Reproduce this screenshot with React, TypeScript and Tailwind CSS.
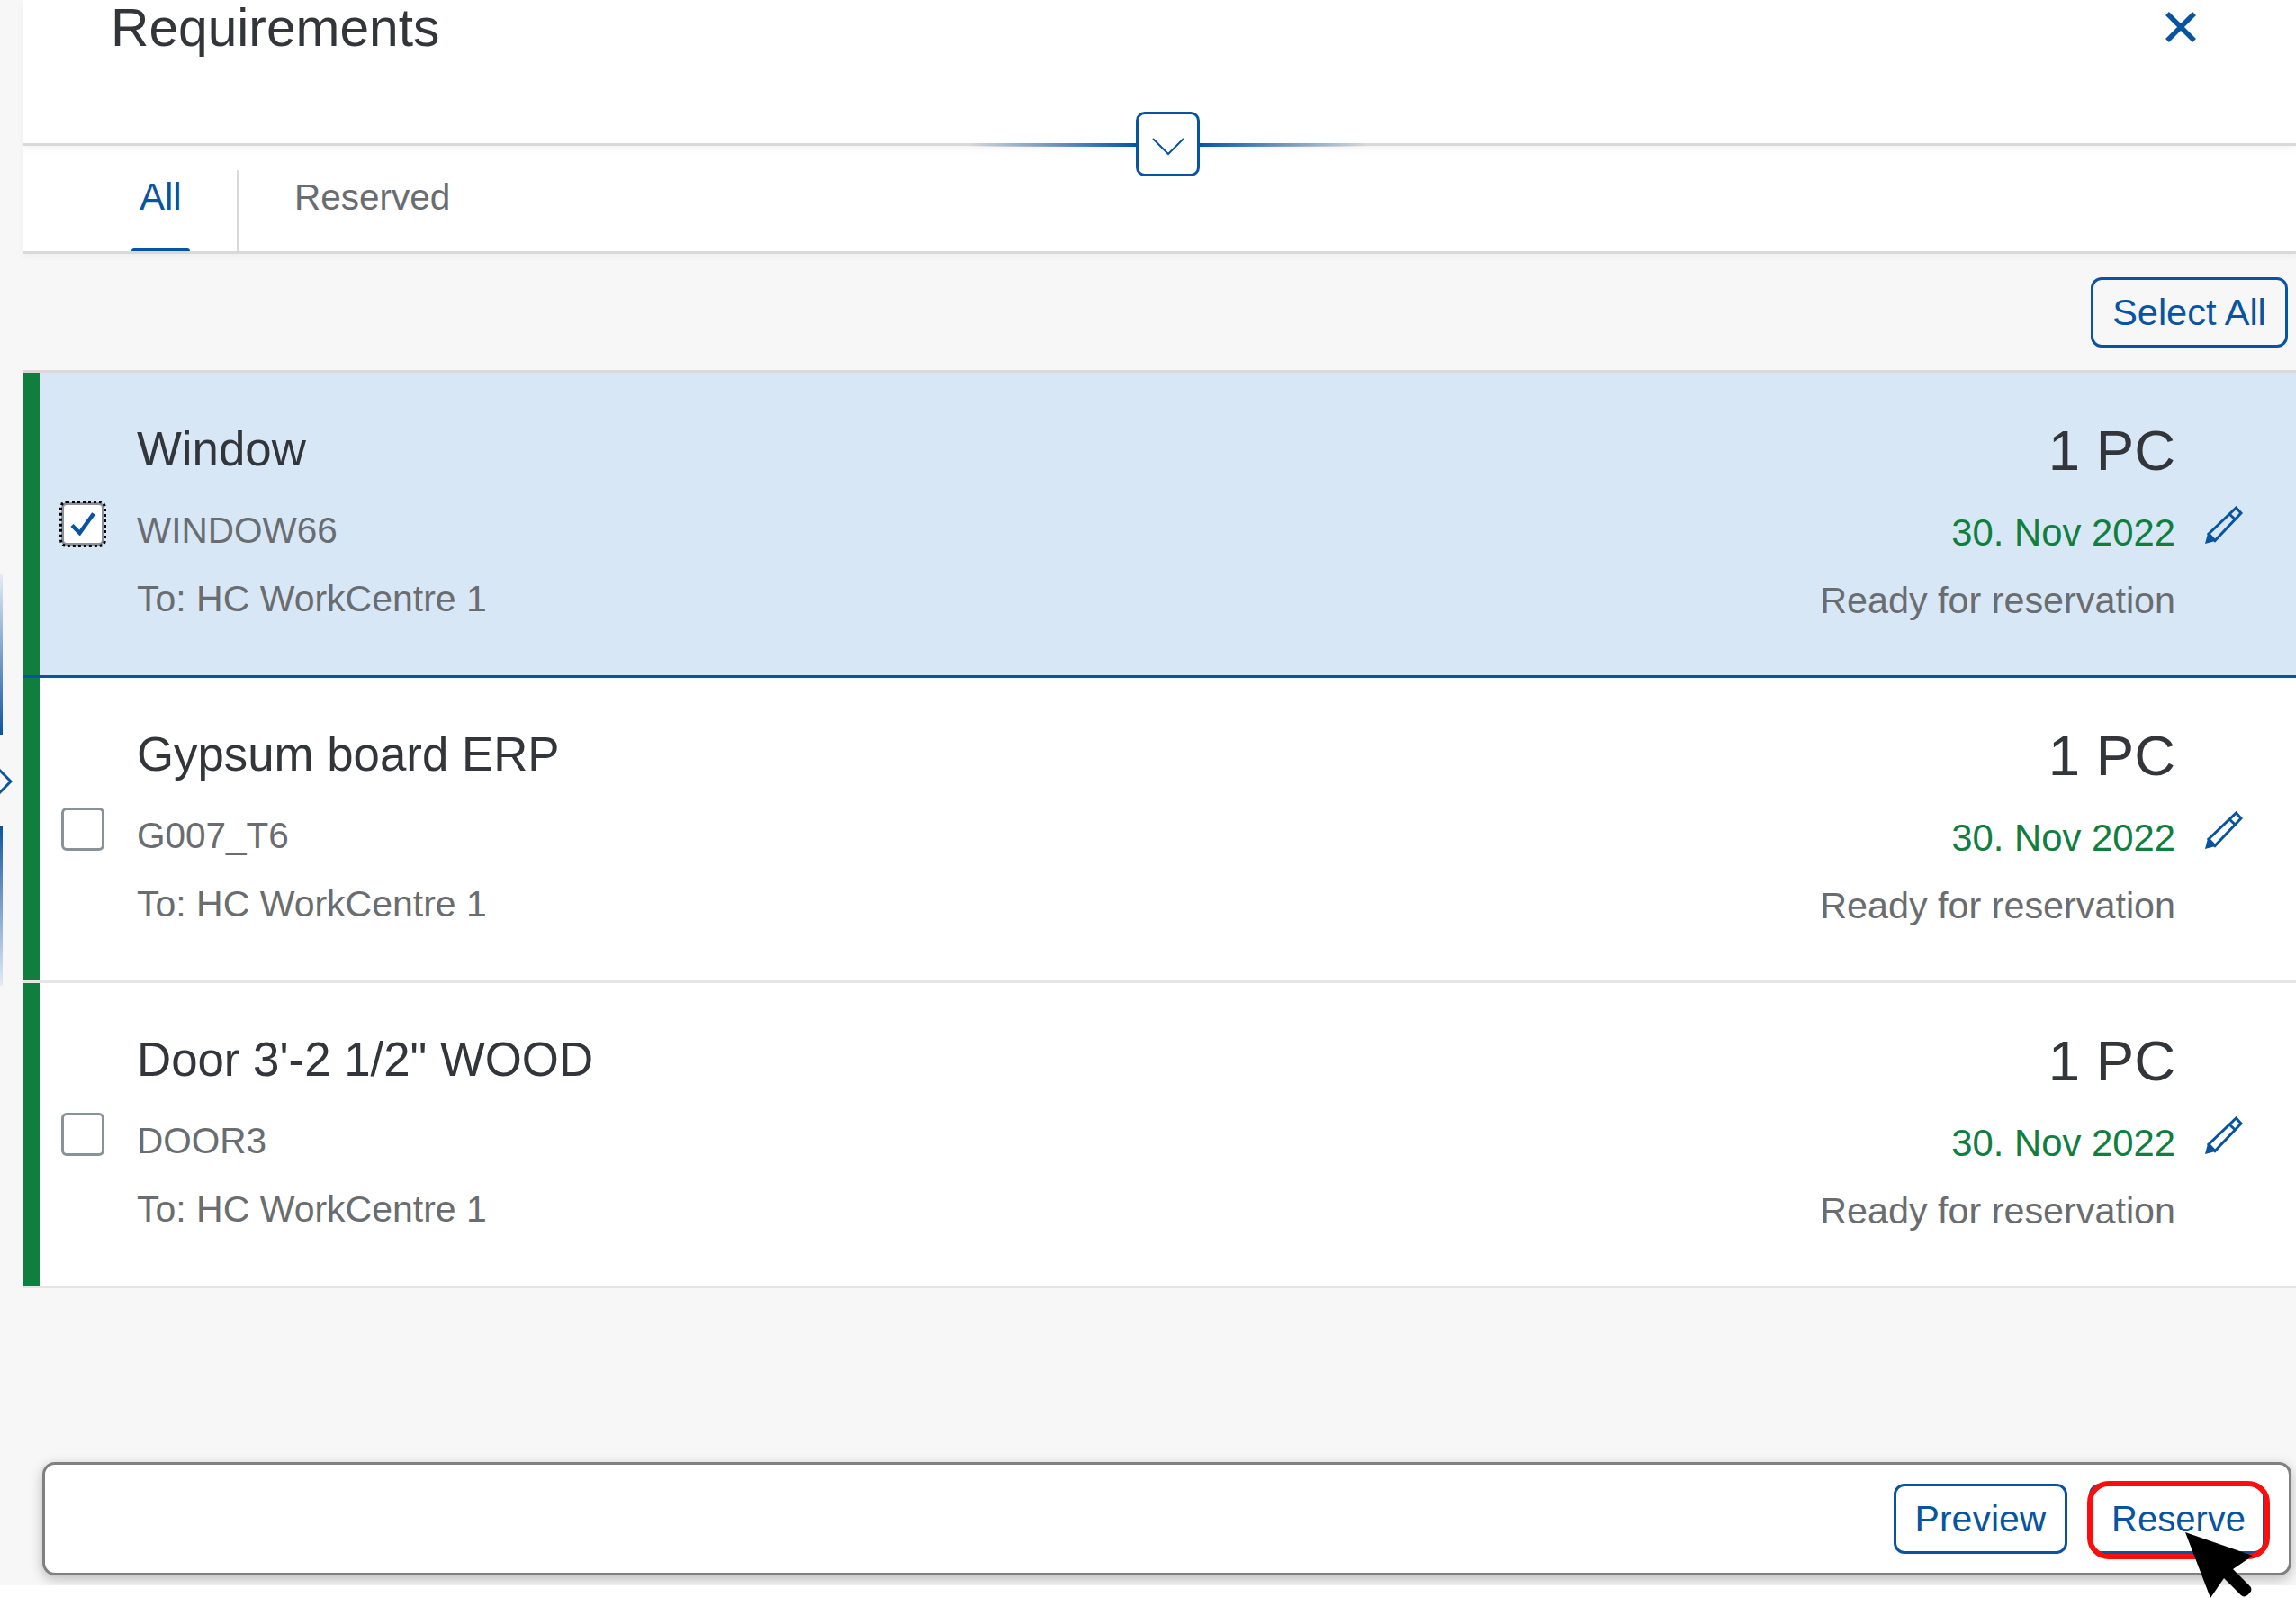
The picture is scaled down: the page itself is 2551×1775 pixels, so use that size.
const rows = [
  { name: 'Window', code: 'WINDOW66', selected: true },
  { name: 'Gypsum board ERP', code: 'G007_T6', selected: false },
  { name: 'Door 3\'-2 1/2" WOOD', code: 'DOOR3', selected: false },
];

function Pencil() {
  return (
    <svg viewBox="0 0 42 42" className="h-[42px] w-[42px]" fill="none" stroke="#0854a0" strokeWidth="3">
      <path d="M4 31 34.500 2 40 8 11 38.500Z" />
      <path d="M27 9l7 6.500" />
      <path d="M0 42l3-11.500 8.500 8.500Z" fill="#0854a0" stroke="none" />
    </svg>
  );
}

function Row({ name, code, selected }: { name: string; code: string; selected: boolean }) {
  return (
    <div
      className={
        selected
          ? 'relative flex h-[339px] border-b-[3px] border-[#0854a0] bg-[#d8e7f6]'
          : 'relative flex h-[339px] border-b-[3px] border-[#e5e5e5] bg-white'
      }
    >
      <div className="w-[18px] shrink-0 bg-[#107e3e]" />
      <div className="w-[108px] shrink-0 pl-[24px] pt-[144px]">
        <div
          className={
            selected
              ? 'flex h-[48px] w-[48px] items-center justify-center rounded-[6px] border-[3px] border-[#89919a] bg-white outline-[3px] outline-dotted outline-offset-[-1px] outline-black'
              : 'h-[48px] w-[48px] rounded-[6px] border-[3px] border-[#89919a] bg-white'
          }
        >
          {selected && (
            <svg viewBox="0 0 28 26" className="h-[26px] w-[28px]" fill="none" stroke="#0854a0" strokeWidth="4.500">
              <path d="M2 14.500 10.500 23 26 1.500" />
            </svg>
          )}
        </div>
      </div>
      <div className="min-w-0 flex-1 pt-[55px]">
        <p className="text-[52.800px] leading-[60px] text-[#32363a]">{name}</p>
        <p className="mt-[37px] text-[40.500px] leading-[46px] text-[#6a6d70]">{code}</p>
        <p className="mt-[30px] text-[41px] leading-[46px] text-[#6a6d70]">To: HC WorkCentre 1</p>
      </div>
      <div className="flex flex-col items-end pt-[51px]">
        <p className="text-[63.500px] leading-[70px] text-[#32363a]">1 PC</p>
        <p className="mt-[34px] text-[41.800px] leading-[46px] text-[#107e3e]">30. Nov 2022</p>
        <p className="mt-[29px] text-[41.300px] leading-[46px] text-[#6a6d70]">Ready for reservation</p>
      </div>
      <div className="ml-[33px] mr-[59px] pt-[148px]">
        <Pencil />
      </div>
    </div>
  );
}

export default function App() {
  return (
    <div className="h-[1775px] w-[2551px] overflow-hidden bg-white font-['Liberation_Sans',sans-serif]">
      <div className="flex h-[1761px] overflow-hidden bg-[#f7f7f7]">
        {/* collapsed side splitter */}
        <div className="flex w-[26px] shrink-0 flex-col pt-[638px]">
          <div className="h-[178px] w-[3px] bg-gradient-to-b from-[#e4ecf5] to-[#0854a0]" />
          <svg viewBox="0 0 14 28" className="mt-[38px] h-[28px] w-[14px]" fill="none" stroke="#0854a0" strokeWidth="3">
            <path d="M-1 1 12 14-1 27" />
          </svg>
          <div className="mt-[36px] h-[177px] w-[3px] bg-gradient-to-b from-[#0854a0] to-[#e4ecf5]" />
        </div>

        <div className="flex min-w-0 flex-1 flex-col">
          <header className="relative z-10 flex h-[162px] shrink-0 items-start justify-between border-b-[3px] border-[#d9d9d9] bg-white pl-[97px] pr-[111px] shadow-[0_3px_8px_rgba(0,0,0,0.05)]">
            <h1 className="text-[58.700px] leading-[62px] font-normal text-[#32363a]">Requirements</h1>
            <svg viewBox="0 0 34 34" className="mt-[13px] h-[34px] w-[34px]" stroke="#0854a0" strokeWidth="5.500">
              <path d="M2 2 32 32M32 2 2 32" />
            </svg>
            <div className="absolute left-[1049px] top-[159px] h-[4px] w-[187px] bg-gradient-to-r from-transparent to-[#0854a0]" />
            <div className="absolute left-[1306px] top-[159px] h-[4px] w-[188px] bg-gradient-to-r from-[#0854a0] to-transparent" />
            <button
              type="button"
              className="absolute left-[1236px] top-[124px] flex h-[72px] w-[71px] items-center justify-center rounded-[10px] border-[3px] border-[#0854a0] bg-white pt-[6px]"
            >
              <svg viewBox="0 0 36 20" className="h-[20px] w-[36px]" fill="none" stroke="#0854a0" strokeWidth="2">
                <path d="M1 1 18 18 35 1" />
              </svg>
            </button>
          </header>

          <nav className="relative flex h-[120px] shrink-0 border-b-[3px] border-[#d9d9d9] bg-white pt-[27px] shadow-[0_3px_8px_rgba(0,0,0,0.04)]">
            <div className="relative ml-[120px] w-[120px] border-r-[3px] border-[#d9d9d9] pt-[7px] text-[42px] leading-[46px] text-[#0854a0]">
              <span className="ml-[9px]">All</span>
              <div className="absolute bottom-0 left-0 h-[3px] w-[65px] rounded-t-[3px] bg-[#0854a0]" />
            </div>
            <span className="ml-[61px] pt-[7px] text-[40.500px] leading-[46px] text-[#6a6d70]">Reserved</span>
          </nav>

          <div className="flex h-[129px] shrink-0 items-start justify-end pr-[9px] pt-[26px]">
            <button
              type="button"
              className="h-[78px] w-[219px] rounded-[12px] border-[3px] border-[#0854a0] bg-[#f7f7f7] text-[41.500px] leading-[46px] text-[#0854a0]"
            >
              Select All
            </button>
          </div>

          <div className="border-t-[3px] border-[#d9d9d9]">
            {rows.map((r) => (
              <Row key={r.code} name={r.name} code={r.code} selected={r.selected} />
            ))}
          </div>

          <div className="flex-1" />

          <footer className="relative mb-[11px] ml-[21px] mr-[5px] flex h-[126px] shrink-0 items-center justify-end gap-[24px] rounded-[14px] border-[3px] border-[#808080] bg-white pr-[26px] shadow-[0_4px_14px_rgba(0,0,0,0.25)]">
            <button
              type="button"
              className="h-[78px] w-[193px] rounded-[12px] border-[3px] border-[#0854a0] bg-white text-[41px] leading-[46px] text-[#0854a0]"
            >
              Preview
            </button>
            <button
              type="button"
              className="relative h-[78px] w-[196px] rounded-[12px] border-[3px] border-[#0854a0] bg-white pl-[3px] text-[40px] leading-[46px] text-[#0854a0]"
            >
              Reserve
              <span className="absolute -bottom-[9px] -left-[5px] -right-[8px] -top-[6px] rounded-[24px] border-[6px] border-[#ff0d0d]" />
            </button>
          </footer>
        </div>
      </div>
      {/* mouse pointer lying over the button */}
      <svg viewBox="0 0 80 76" className="absolute left-[2426px] top-[1701px] h-[76px] w-[80px]" fill="#000">
        <path d="M2 1 77 27 55 42 74 61a5 5 0 0 1 0 7l-3 3a5 5 0 0 1-7 0L45 52 30 74Z" />
      </svg>
    </div>
  );
}
